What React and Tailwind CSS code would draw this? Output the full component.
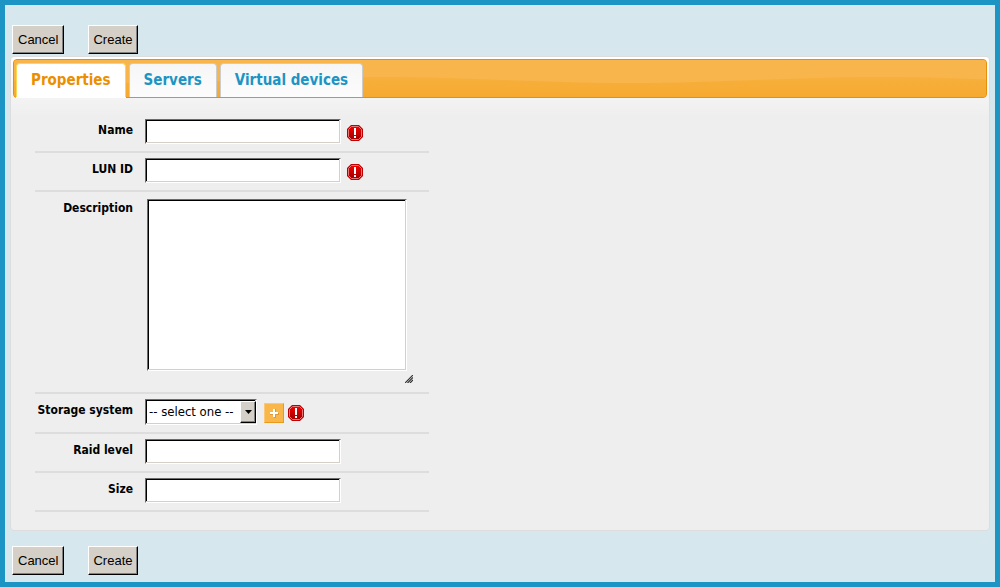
import React, { useState } from "react";

const bevelIn =
  "bg-white border border-t-[#6b6b6b] border-l-[#6b6b6b] border-b-white border-r-white shadow-[inset_-1px_-1px_0_#d4d0c8,inset_1px_1px_0_#000] outline-none";
const bevelOut =
  "bg-[#d4d0c8] border border-t-white border-l-white border-b-black border-r-black shadow-[inset_-1px_-1px_0_#808080]";

function Actions() {
  return (
    <div className="flex gap-6 px-[7px] font-['Liberation_Sans',sans-serif] text-[13px] leading-4">
      <button type="button" className={`${bevelOut} h-[29px] px-[5px] text-black`}>Cancel</button>
      <button type="button" className={`${bevelOut} h-[29px] px-1 text-black`}>Create</button>
    </div>
  );
}

function Required() {
  return (
    <svg width="16" height="16" viewBox="0 0 16 16" role="img" aria-label="Required" className="shrink-0">
      <defs>
        <linearGradient id="stop" x1="0" y1="0" x2="0" y2="1">
          <stop offset="0" stopColor="#f40000" />
          <stop offset="1" stopColor="#a00000" />
        </linearGradient>
      </defs>
      <path d="M4 0h8l4 4v8l-4 4H4l-4-4V4z" fill="#c00000" />
      <path d="M4.500 1.500h7l3 3v7l-3 3h-7l-3-3v-7z" fill="url(#stop)" stroke="#e87878" />
      <path d="M7 3h2v7H7zM7 11h2v2H7z" fill="#fff" />
    </svg>
  );
}

function HeaderGloss() {
  return (
    <svg width="100%" height="100%" className="absolute inset-0 rounded-[3px]" aria-hidden="true">
      <defs>
        <linearGradient id="low" x1="0" y1="0" x2="0" y2="1">
          <stop offset="0" stopColor="#f7b03c" />
          <stop offset="1" stopColor="#f6a930" />
        </linearGradient>
        <pattern id="wave" x="366" y="0" width="500" height="37" patternUnits="userSpaceOnUse">
          <rect width="500" height="37" fill="#f7b54c" />
          <path d="M0 17C90 17 160 23 250 23S410 17 500 17V37H0z" fill="url(#low)" />
        </pattern>
      </defs>
      <rect width="100%" height="100%" fill="url(#wave)" />
    </svg>
  );
}

function Row({ id, label, required, children }) {
  return (
    <div className="flex border-b-2 border-[#dddddd] pt-[5px] pb-[7px]">
      <label
        htmlFor={id}
        className="w-[98px] shrink-0 pt-[3px] text-right font-['DejaVu_Sans_Condensed','DejaVu_Sans',sans-serif] text-xs leading-4 font-bold text-black"
      >
        {label}
      </label>
      <div className="ml-3 flex items-start">
        {children}
        {required && <div className="ml-1 pt-1.5"><Required /></div>}
      </div>
    </div>
  );
}

function TextRow({ id, label, required }) {
  return (
    <Row id={id} label={label} required={required}>
      <input id={id} type="text" className={`${bevelIn} mr-0.5 h-[25px] w-[196px] px-1 text-xs`} />
    </Row>
  );
}

const tabs = ["Properties", "Servers", "Virtual devices"];

export default function App() {
  const [active, setActive] = useState(0);
  return (
    <div className="min-h-screen border-[5px] border-[#1c94c4] bg-[#d6e8ee] pt-5 pb-[7px] font-['DejaVu_Sans_Condensed','DejaVu_Sans',sans-serif]">
      <Actions />
      <main className="mx-[5px] mt-0.5 rounded-[4px] border border-[#dddddd] bg-[#eeeeee] bg-linear-to-b from-white from-0% to-[#eeeeee] to-[60px] p-0.5">
        <div className="relative h-[39px] rounded-[4px] border border-[#e78f08] bg-[#f6a828]">
          <HeaderGloss />
          <div role="tablist" className="relative flex h-full items-stretch gap-[3px] pt-[3px] pl-0.5">
            {tabs.map((t, i) => (
              <button
                key={t}
                type="button"
                role="tab"
                aria-selected={active === i}
                onClick={() => setActive(i)}
                className={`rounded-t-[4px] border border-b-0 px-3.5 pb-0.5 text-[15px] leading-5 font-bold ${
                  active === i
                    ? "border-[#fbd850] bg-white text-[#eb8f00] shadow-[0_1px_0_#fff]"
                    : "border-[#cccccc] bg-linear-to-b from-[#f6f6f6] to-[#fcfcfc] text-[#1c94c4]"
                }`}
              >
                {t}
              </button>
            ))}
          </div>
        </div>
        <form className="max-w-[416px] pt-4 pb-4 pl-[22px]" onSubmit={(e) => e.preventDefault()}>
          <TextRow id="name" label="Name" required />
          <TextRow id="lun" label="LUN ID" required />
          <Row id="description" label="Description">
            <div className="flex flex-col items-end pt-0.5 pb-0.5 pl-0.5">
              <textarea id="description" className={`${bevelIn} mr-1.5 h-[172px] w-[260px] resize-none p-1 text-xs`} />
              <svg width="8" height="8" viewBox="0 0 8 8" className="mt-1" aria-hidden="true">
                <path d="M0 8L8 0M2.500 8L8 2.500M5 8l3-3" stroke="#333" strokeWidth="1.2" />
              </svg>
            </div>
          </Row>
          <Row id="storage" label="Storage system" required>
            <div className="relative flex">
              <select
                id="storage"
                className={`${bevelIn} h-[26px] w-28 appearance-none pr-5 pl-[3px] text-[13px] text-black`}
              >
                <option>-- select one --</option>
              </select>
              <span className={`${bevelOut} pointer-events-none absolute top-0.5 right-px flex h-[22px] w-4 items-center justify-center`}>
                <svg width="7" height="4" viewBox="0 0 7 4" aria-hidden="true">
                  <path d="M0 0h7L3.500 4z" fill="#000" />
                </svg>
              </span>
            </div>
            <button
              type="button"
              aria-label="Add storage system"
              className="mt-1 ml-[7px] flex size-5 items-center justify-center border border-t-[#fbc878] border-l-[#fbc878] border-r-[#e99a1c] border-b-[#e99a1c] bg-[#f8b64b]"
            >
              <svg width="10" height="10" viewBox="0 0 10 10" aria-hidden="true">
                <path d="M5 1h2v4h3v2H7v3H5V7H1V5h4z" fill="#dc9a35" />
                <path d="M4 1h2v3h3v2H6v3H4V6H1V4h3z" fill="#fff" />
              </svg>
            </button>
          </Row>
          <TextRow id="raid" label="Raid level" />
          <TextRow id="size" label="Size" />
        </form>
      </main>
      <div className="pt-[15px]">
        <Actions />
      </div>
    </div>
  );
}
